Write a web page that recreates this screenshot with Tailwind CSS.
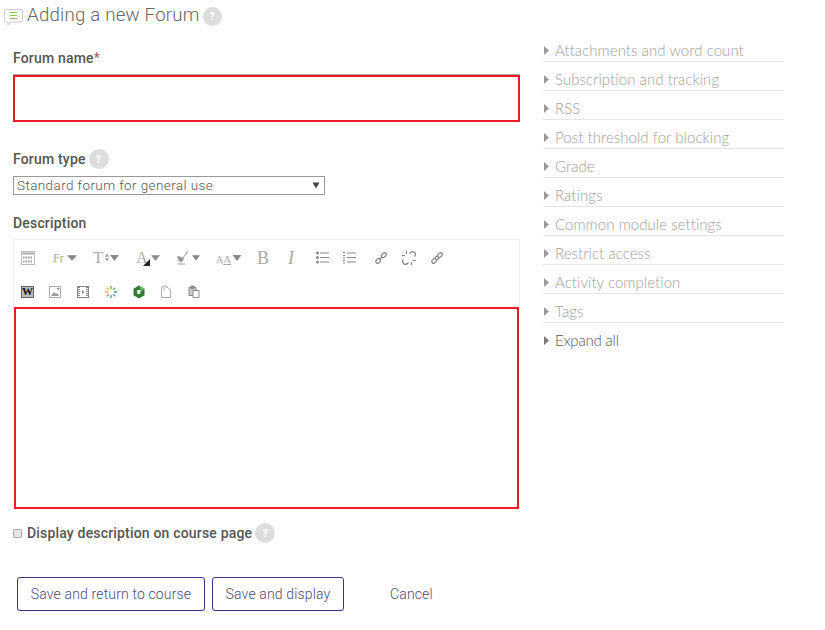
<!DOCTYPE html>
<html>
<head>
<script src="https://cdn.jsdelivr.net/npm/@tailwindcss/browser@4"></script>
</head>
<body class="bg-white">
<div class="flex w-[825px] h-[630px] overflow-hidden bg-white font-['Roboto',sans-serif] text-[#555]">
  <div class="w-[543px] shrink-0 pl-[13px] flex flex-col">
    <div class="flex items-center h-[30px] -ml-[9px]">
      <svg class="w-[20px] h-[20px] mt-[4px]" viewBox="0 0 20 20" fill="none"><path d="M2 2.500h15a1.500 1.500 0 0 1 1.500 1.500v9.500a1.500 1.500 0 0 1-1.500 1.500H7l-3 3v-3H2A1.500 1.500 0 0 1 .5 13.500V4A1.500 1.500 0 0 1 2 2.500z" fill="#fff" stroke="#ccc"/><path d="M6 5.500h7M6 8.500h7M6 11.500h7" stroke="#8bc34a" stroke-width="1.100"/></svg>
      <span class="ml-[3px] text-[18.700px] font-light text-[#666] tracking-[0.2px] leading-none">Adding a new Forum</span>
      <span class="ml-[3px] mt-[2px] w-[19px] h-[19px] rounded-full bg-[#ddd] text-white text-[10px] font-bold flex items-center justify-center">?</span>
    </div>
    <label class="mt-[19px] text-[14px] font-medium leading-[18px] h-[18px] tracking-[0.18px]">Forum name<span class="text-[#a9595a] font-normal">*</span></label>
    <div class="mt-[8px] w-[507px] h-[47px] border-2 border-[#ed1c24] bg-white shadow-[0_-1px_0_#aaa]"></div>
    <div class="mt-[27px] flex items-center h-[20px]">
      <span class="text-[14px] font-medium tracking-[0.18px]">Forum type</span>
      <span class="ml-[3px] w-[20px] h-[20px] rounded-full bg-[#ddd] text-white text-[10px] font-bold flex items-center justify-center">?</span>
    </div>
    <div class="mt-[7px] w-[312px] h-[19px] border border-[#999] flex items-center justify-between pl-[3px] pr-[4px] text-[13.500px] font-light text-[#555] leading-none tracking-[0.4px]">
      <span>Standard forum for general use</span>
      <svg class="w-[8px] h-[7px]" viewBox="0 0 8 7"><path d="M0.500 0.500h7L4 6.500z" fill="#444"/></svg>
    </div>
    <label class="mt-[19px] text-[14px] font-medium leading-[18px] h-[18px] tracking-[0.18px]">Description</label>
    <div class="mt-[7px] w-[507px] border border-[#eee] border-b-0 h-[68px] flex flex-col">
      <div class="flex items-center h-[35px] pl-[7px] shrink-0">
        <svg class="w-[14px] h-[14px]" viewBox="0 0 14 14" fill="none"><rect x="0.500" y="0.500" width="13" height="13" stroke="#bbb"/><path d="M1 2.500h12" stroke-width="2" stroke="#aaa"/><path d="M2 6.500h10M2 10.500h10" stroke-width="2" stroke-dasharray="1.500 1" stroke="#999"/></svg>
        <span class="ml-[18px] font-['Liberation_Serif',serif] text-[12px] text-[#aaa] w-[14px] leading-none">Fr</span>
        <svg class="w-[10px] h-[6px]" viewBox="0 0 11 6"><path d="M0 0h11L5.500 6z" fill="#888"/></svg>
        <span class="ml-[16px] font-['Liberation_Serif',serif] text-[17px] text-[#aaa] w-[11px] leading-none">T</span>
        <svg class="w-[4px] h-[9px] ml-[1px]" viewBox="0 0 5 10"><path d="M0 4h5L2.500 0zM0 6h5L2.500 10z" fill="#999"/></svg>
        <svg class="w-[9px] h-[6px] ml-[1px]" viewBox="0 0 9 6"><path d="M0 0h9L4.500 6z" fill="#888"/></svg>
        <span class="ml-[17px] relative w-[14px] h-[16px] font-['Liberation_Serif',serif] text-[16px] text-[#aaa] leading-none">A<svg class="absolute right-0 bottom-0 w-[7px] h-[7px]" viewBox="0 0 7 7"><path d="M7 0v7H0z" fill="#222"/></svg></span>
        <svg class="w-[9px] h-[6px] ml-[1px]" viewBox="0 0 10 6"><path d="M0 0h10L5 6z" fill="#888"/></svg>
        <svg class="ml-[16px] w-[15px] h-[15px]" viewBox="0 0 15 15" fill="none"><path d="M1 6l5 1 2 2-2.500 3.500L2.500 11z" fill="#999"/><path d="M7 8l5-7M2 14h7" stroke="#999"/></svg>
        <svg class="w-[8px] h-[6px] ml-[1px]" viewBox="0 0 9 6"><path d="M0 0h9L4.500 6z" fill="#888"/></svg>
        <span class="ml-[16px] w-[15px] h-[15px] font-['Liberation_Serif',serif] text-[#aaa] leading-none whitespace-nowrap"><span class="text-[10px]">A</span><span class="text-[11px] underline">A</span></span>
        <svg class="w-[10px] h-[6px] ml-[1px]" viewBox="0 0 9 6"><path d="M0 0h9L4.500 6z" fill="#888"/></svg>
        <span class="ml-[15px] w-[12px] font-['Liberation_Serif',serif] text-[18px] text-[#aaa] leading-none">B</span>
        <span class="ml-[19px] w-[9px] font-['Liberation_Serif',serif] text-[18px] italic text-[#aaa] leading-none">I</span>
        <svg class="ml-[19px] w-[13px] h-[13px]" viewBox="0 0 13 13" fill="#888"><circle cx="1.500" cy="2" r="1.500"/><circle cx="1.500" cy="6.500" r="1.500"/><circle cx="1.500" cy="11" r="1.500"/><path d="M4 1.500h9v1H4zM4 6h9v1H4zM4 10.500h9v1H4z"/></svg>
        <svg class="ml-[14px] w-[13px] h-[13px]" viewBox="0 0 13 13" fill="#888"><path d="M0 1h2v1H0zM0 4h2v1H0zM0 6.500h2v1H0zM0 9h2v1H0zM0 11.500h2v1H0zM4 1.500h9v1H4zM4 6h9v1H4zM4 10.500h9v1H4z"/></svg>
        <svg class="ml-[18px] w-[14px] h-[14px]" viewBox="0 0 14 14" fill="none" stroke="#888" stroke-width="1.200"><path d="M5.500 8.500l3-3"/><rect x="-2.500" y="-1.800" width="5.500" height="3.600" rx="1.800" transform="translate(4 10) rotate(-45)"/><rect x="-3" y="-1.800" width="5.500" height="3.600" rx="1.800" transform="translate(10 4) rotate(-45)"/></svg>
        <svg class="ml-[14px] w-[14px] h-[14px]" viewBox="0 0 14 14" fill="none" stroke="#888" stroke-width="1.200"><path d="M1.500 8.500a2.500 2.500 0 0 0 4 4l1-1M12.500 5.500a2.500 2.500 0 0 0-4-4l-1 1M4.500 0v3M0 4.500h3M9.500 14v-3M14 9.500h-3"/></svg>
        <svg class="ml-[14px] w-[14px] h-[14px]" viewBox="0 0 14 14" fill="none" stroke="#888" stroke-width="1.200"><path d="M5.500 8.500l3-3"/><rect x="-2.500" y="-1.800" width="5.500" height="3.600" rx="1.800" transform="translate(4 10) rotate(-45)"/><rect x="-3" y="-1.800" width="5.500" height="3.600" rx="1.800" transform="translate(10 4) rotate(-45)"/><circle cx="7" cy="7" r="1.600" fill="#fff"/></svg>
      </div>
      <div class="flex items-center h-[33px] pl-[7px] shrink-0">
        <span class="w-[13px] h-[12px] bg-[#bbb] border border-[#666] font-['Liberation_Serif',serif] text-[11px] font-bold text-[#111] leading-none flex items-center justify-center">W</span>
        <svg class="ml-[15px] w-[12px] h-[12px]" viewBox="0 0 12 12" fill="none"><rect x="0.500" y="0.500" width="11" height="11" stroke="#aaa"/><path d="M2 10l3-4 2 2 1.500-1L10 10z" fill="#999"/><path d="M8 2.500h2.500M9.200 1.500v2.500" stroke="#888"/></svg>
        <svg class="ml-[16px] w-[12px] h-[12px]" viewBox="0 0 12 12" fill="none" stroke="#888"><rect x="0.500" y="0.500" width="11" height="11"/><path d="M2 1v10M10 1v10" stroke-dasharray="1 1" stroke-width="2"/><path d="M5 4l2.500 2L5 8z" fill="#888" stroke="none"/></svg>
        <svg class="ml-[16px] w-[12px] h-[12px]" viewBox="0 0 12 12" stroke-width="1.400"><path d="M6 0v3" stroke="#7cb342"/><path d="M6 9v3" stroke="#29a9e0"/><path d="M0 6h3" stroke="#f0a830"/><path d="M9 6h3" stroke="#43a047"/><path d="M1.800 1.800l2 2" stroke="#d4c22d"/><path d="M8.200 8.200l2 2" stroke="#29a9e0"/><path d="M10.200 1.800l-2 2" stroke="#66bb6a"/><path d="M3.800 8.200l-2 2" stroke="#e57373"/></svg>
        <svg class="ml-[15px] w-[14px] h-[14px]" viewBox="0 0 14 14" fill="none"><path d="M7 .5l5.500 3.200v6.600L7 13.500 1.500 10.300V3.700z" fill="#2e7d32"/><path d="M7 .5l5.500 3.200L9.500 6z" fill="#66bb6a"/><path d="M5 5h4l-1 4H5.500z" fill="#fff"/></svg>
        <svg class="ml-[14px] w-[12px] h-[13px]" viewBox="0 0 12 13" fill="none" stroke="#aaa"><path d="M1.500 3.500q0-2.500 2-2.500h2.500l4.500 4v7.500h-9z"/><path d="M4 1.500v4" stroke="#aaa"/></svg>
        <svg class="ml-[16px] w-[12px] h-[13px]" viewBox="0 0 12 13" fill="#ccc" stroke="#888"><path d="M1 2.500h7v8H1z"/><path d="M5 5.500h6v7H5z" fill="#fff"/><path d="M3 1h3v2.500H3z" fill="#888"/></svg>
      </div>
    </div>
    <div class="w-[505px] ml-[1px] h-[202px] border-2 border-[#ed1c24] bg-white"></div>
    <div class="mt-[14px] flex items-center h-[20px]">
      <span class="w-[9px] h-[9px] border border-[#aaa] bg-[#e5e5e5] rounded-[2px] shrink-0"></span>
      <span class="ml-[5px] text-[14px] font-medium leading-none tracking-[0.18px]">Display description on course page</span>
      <span class="ml-[3px] w-[20px] h-[20px] rounded-full bg-[#ddd] text-white text-[10px] font-bold flex items-center justify-center">?</span>
    </div>
    <div class="mt-[34px] ml-[4px] flex items-center text-[14px] leading-[20px] text-[#4f4a78] font-light tracking-[0.15px]">
      <div class="w-[188px] h-[34px] pb-[1px] border border-[#4b2a8a] rounded-[3px] flex items-center justify-center">Save and return to course</div>
      <div class="ml-[7px] w-[132px] h-[34px] pb-[1px] border border-[#4b2a8a] rounded-[3px] flex items-center justify-center">Save and display</div>
      <div class="ml-[46px]">Cancel</div>
    </div>
  </div>
  <div class="w-[241px] pt-[37px] font-['Lato',sans-serif] font-light text-[15px] text-[#a0a0a0] tracking-[0.06px]">
    <div class="flex items-center h-[25px] pt-[2px] border-b border-[#e5e5e5] mb-[4px]"><svg class="w-[5px] h-[9px] ml-[1px] mr-[6px]" viewBox="0 0 5 8" preserveAspectRatio="none"><path d="M0 0l5 4-5 4z" fill="#999"/></svg>Attachments and word count</div>
    <div class="flex items-center h-[25px] pt-[2px] border-b border-[#e5e5e5] mb-[4px]"><svg class="w-[5px] h-[9px] ml-[1px] mr-[6px]" viewBox="0 0 5 8" preserveAspectRatio="none"><path d="M0 0l5 4-5 4z" fill="#999"/></svg>Subscription and tracking</div>
    <div class="flex items-center h-[25px] pt-[2px] border-b border-[#e5e5e5] mb-[4px]"><svg class="w-[5px] h-[9px] ml-[1px] mr-[6px]" viewBox="0 0 5 8" preserveAspectRatio="none"><path d="M0 0l5 4-5 4z" fill="#999"/></svg>RSS</div>
    <div class="flex items-center h-[25px] pt-[2px] border-b border-[#e5e5e5] mb-[4px]"><svg class="w-[5px] h-[9px] ml-[1px] mr-[6px]" viewBox="0 0 5 8" preserveAspectRatio="none"><path d="M0 0l5 4-5 4z" fill="#999"/></svg>Post threshold for blocking</div>
    <div class="flex items-center h-[25px] pt-[2px] border-b border-[#e5e5e5] mb-[4px]"><svg class="w-[5px] h-[9px] ml-[1px] mr-[6px]" viewBox="0 0 5 8" preserveAspectRatio="none"><path d="M0 0l5 4-5 4z" fill="#999"/></svg>Grade</div>
    <div class="flex items-center h-[25px] pt-[2px] border-b border-[#e5e5e5] mb-[4px]"><svg class="w-[5px] h-[9px] ml-[1px] mr-[6px]" viewBox="0 0 5 8" preserveAspectRatio="none"><path d="M0 0l5 4-5 4z" fill="#999"/></svg>Ratings</div>
    <div class="flex items-center h-[25px] pt-[2px] border-b border-[#e5e5e5] mb-[4px]"><svg class="w-[5px] h-[9px] ml-[1px] mr-[6px]" viewBox="0 0 5 8" preserveAspectRatio="none"><path d="M0 0l5 4-5 4z" fill="#999"/></svg>Common module settings</div>
    <div class="flex items-center h-[25px] pt-[2px] border-b border-[#e5e5e5] mb-[4px]"><svg class="w-[5px] h-[9px] ml-[1px] mr-[6px]" viewBox="0 0 5 8" preserveAspectRatio="none"><path d="M0 0l5 4-5 4z" fill="#999"/></svg>Restrict access</div>
    <div class="flex items-center h-[25px] pt-[2px] border-b border-[#e5e5e5] mb-[4px]"><svg class="w-[5px] h-[9px] ml-[1px] mr-[6px]" viewBox="0 0 5 8" preserveAspectRatio="none"><path d="M0 0l5 4-5 4z" fill="#999"/></svg>Activity completion</div>
    <div class="flex items-center h-[25px] pt-[2px] border-b border-[#e5e5e5] mb-[4px]"><svg class="w-[5px] h-[9px] ml-[1px] mr-[6px]" viewBox="0 0 5 8" preserveAspectRatio="none"><path d="M0 0l5 4-5 4z" fill="#999"/></svg>Tags</div>
    <div class="flex items-center h-[25px] pt-[2px] text-[#555] tracking-[-0.2px]"><svg class="w-[5px] h-[9px] ml-[1px] mr-[6px]" viewBox="0 0 5 8" preserveAspectRatio="none"><path d="M0 0l5 4-5 4z" fill="#777"/></svg>Expand all</div>
  </div>
</div>
</body>
</html>
